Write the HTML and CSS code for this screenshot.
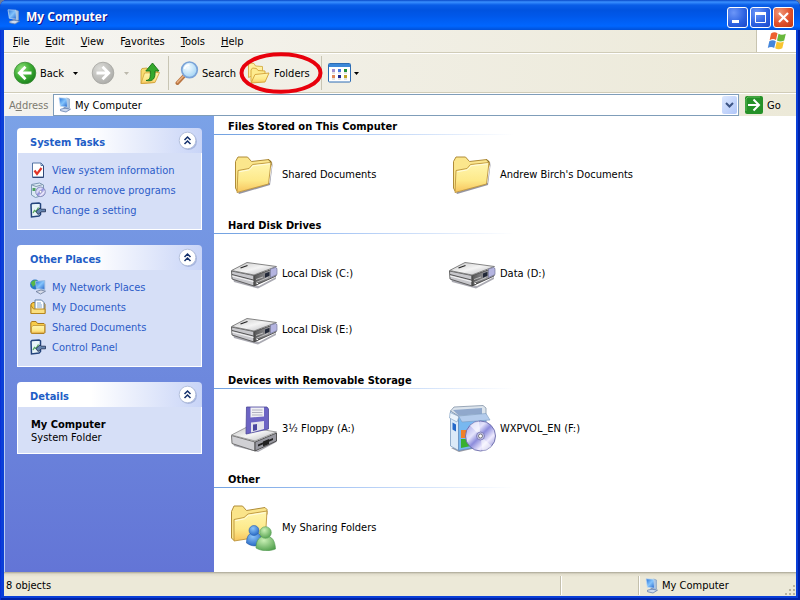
FILE: index.html
```html
<!DOCTYPE html>
<html lang="en">
<head>
<meta charset="utf-8">
<title>My Computer</title>
<link rel="stylesheet" href="styles.css">
</head>
<body>
<svg class="sprite" aria-hidden="true">
  <defs>
    <linearGradient id="g-folder" x1="0" y1="0" x2="0" y2="1"><stop offset="0" stop-color="#fff6b0"/><stop offset=".6" stop-color="#fde98a"/><stop offset="1" stop-color="#f7c45c"/></linearGradient>
    <linearGradient id="g-screen" x1="0" y1="0" x2="1" y2="1"><stop offset="0" stop-color="#2470d8"/><stop offset=".5" stop-color="#84c4fc"/><stop offset="1" stop-color="#2060c8"/></linearGradient>
    <radialGradient id="g-green" cx=".35" cy=".3" r=".8"><stop offset="0" stop-color="#8fe07a"/><stop offset=".5" stop-color="#3fae35"/><stop offset="1" stop-color="#157a18"/></radialGradient>
    <radialGradient id="g-grey" cx=".35" cy=".3" r=".8"><stop offset="0" stop-color="#dcdcd8"/><stop offset="1" stop-color="#a9a9a6"/></radialGradient>
    <linearGradient id="g-top" x1="0" y1="0" x2="1" y2="1"><stop offset="0" stop-color="#c4c4c4"/><stop offset=".5" stop-color="#f4f4f4"/><stop offset="1" stop-color="#b4b4b8"/></linearGradient>
    <linearGradient id="g-front" x1="0" y1="0" x2="1" y2="0"><stop offset="0" stop-color="#555"/><stop offset="1" stop-color="#b8b8be"/></linearGradient>
    <linearGradient id="g-disc" x1="0" y1="0" x2="1" y2="1"><stop offset="0" stop-color="#9a9ae4"/><stop offset=".35" stop-color="#e4e4fc"/><stop offset=".5" stop-color="#8c8cdc"/><stop offset=".7" stop-color="#f0ecff"/><stop offset="1" stop-color="#7878c8"/></linearGradient>
    <radialGradient id="g-lens" cx=".4" cy=".35" r=".7"><stop offset="0" stop-color="#f4fcff"/><stop offset="1" stop-color="#9fd2f4"/></radialGradient>
    <radialGradient id="g-blueman" cx=".4" cy=".3" r=".8"><stop offset="0" stop-color="#8cc4f8"/><stop offset="1" stop-color="#1c60c0"/></radialGradient>
    <radialGradient id="g-greenman" cx=".4" cy=".3" r=".8"><stop offset="0" stop-color="#c8f0b4"/><stop offset="1" stop-color="#4c9c48"/></radialGradient>
  </defs>
  <symbol id="i-computer" viewBox="0 0 16 16">
    <path d="M9.500 1l3 1V11l-2.500 1z" fill="#a8c0dc" stroke="#7c98bc" stroke-width=".6"/>
    <path d="M2 .8L9.800 1.200 10.500 10.200 3.300 9.300z" fill="url(#g-screen)" stroke="#c4dcf4" stroke-width=".7"/>
    <path d="M6.500 10l3 .3.500 2-3-.2z" fill="#8498b8"/>
    <path d="M3.500 12.200l4.500-1 5.500 1-4.500 2.800-5.500-1.300z" fill="#ccdaf0" stroke="#6480b0" stroke-width=".8"/>
  </symbol>
  <symbol id="i-back" viewBox="0 0 24 24">
    <circle cx="12" cy="12" r="10.800" fill="url(#g-green)" stroke="#3a8a34" stroke-width=".8"/>
    <path d="M12.500 5.800L6.300 12l6.200 6.200M7 12h11.500" fill="none" stroke="#fff" stroke-width="2.800"/>
  </symbol>
  <symbol id="i-forward" viewBox="0 0 24 24">
    <circle cx="12" cy="12" r="10.800" fill="url(#g-grey)" stroke="#a4a4a0" stroke-width=".8"/>
    <path d="M11.500 5.800l6.200 6.200-6.200 6.200M17 12H5.500" fill="none" stroke="#fff" stroke-width="2.800"/>
  </symbol>
  <symbol id="i-up" viewBox="0 0 24 24">
    <path d="M3 9.500l1-2 5-.5 1.500 1.500 9 .5v3L16 21.500 3 22.500z" fill="#f8dc70" stroke="#c89c30" stroke-width=".8"/>
    <path d="M6.500 12l15-.5-4.500 10L3 22.500z" fill="url(#g-folder)" stroke="#d0a038" stroke-width=".8"/>
    <path d="M8 19.500c4.500-.5 4.500-4 4.300-9.500H7.800L14.500 2l6.500 8h-4c.5 7-1.500 11-9 9.500z" fill="#35a82c" stroke="#177018" stroke-width=".9"/>
  </symbol>
  <symbol id="i-search" viewBox="0 0 24 24">
    <path d="M9.500 14.500l-7 7.500" stroke="#b87440" stroke-width="4" stroke-linecap="round"/>
    <path d="M9 14.500l-6.500 6.800" stroke="#e8b080" stroke-width="1.600" stroke-linecap="round"/>
    <circle cx="14.500" cy="8.800" r="7.800" fill="url(#g-lens)" stroke="#7ba4d8" stroke-width="1.700"/>
    <path d="M9.500 8c.6-2.600 2.600-4 5-3.800" fill="none" stroke="#fff" stroke-width="1.600"/>
  </symbol>
  <symbol id="i-folders" viewBox="0 0 24 24">
    <path d="M1.500 16.500V4l1.200-2L7 2.500 8.500 5l7 .5v4.500z" fill="#fff0a0" stroke="#d8b450"/>
    <path d="M4 20.500V9L5.500 7l4 .5L11 9.500l7 .5v5z" fill="#fdeb8e" stroke="#d8ac40"/>
    <path d="M8 13.500l14-1.500-4 9L4 22z" fill="url(#g-folder)" stroke="#d8a840"/>
  </symbol>
  <symbol id="i-views" viewBox="0 0 24 20">
    <rect x=".5" y=".5" width="22" height="18.500" rx="1" fill="#fff" stroke="#2c6cb4"/>
    <rect x="1" y="1" width="21" height="3" fill="#3c88d8"/>
    <path d="M4 6h3v3H4z" fill="#a090d0"/><path d="M10 6h3v3h-3z" fill="#4878e0"/><path d="M16 6h3v3h-3z" fill="#20903c"/>
    <path d="M4 12h3v3H4z" fill="#e08858"/><path d="M10 12h3v3h-3z" fill="#202c90"/><path d="M16 12h3v3h-3z" fill="#c0a428"/>
    <path d="M4 10h3M10 10h3M16 10h3M4 16h3M10 16h3M16 16h3" stroke="#bbb" stroke-width=".8"/>
  </symbol>
  <symbol id="i-flag" viewBox="0 0 20 20">
    <path d="M4 2.500C6.500.8 8.500 1 10.500 2.300L9 9C7 7.800 5 7.800 2.600 9.200z" fill="#ee6030"/>
    <path d="M11.500 2.800c2 1.200 4.500 1.400 7.300 0L17.200 9.500c-2.700 1.300-5 1.200-7.200 0z" fill="#68b83c"/>
    <path d="M2.300 10.200c2.200-1.300 4.400-1.300 6.500 0L7.200 17C5.200 15.600 3 15.600.8 17z" fill="#4486dc"/>
    <path d="M9.800 10.600c2.200 1.200 4.500 1.200 7.100 0l-1.600 6.700c-2.500 1.300-5 1.300-7.100 0z" fill="#f8c430"/>
  </symbol>
  <symbol id="i-folder" viewBox="0 0 48 48">
    <path d="M8 42.500l31.500-9.500L42.500 12v3L40 35 9 44z" fill="#5c5c70" opacity=".65"/>
    <path d="M5.500 38V11.500l2.500-4.500h9.500l4 4.500L39 9.500l2 2v5L7 41z" fill="#fbe68c" stroke="#b08c38"/>
    <path d="M38.500 10l2.500 2v3" fill="none" stroke="#7c6420"/>
    <path d="M8 20.500l11-2 3.500-4 18.500-2-2.500 21.500L7 42.500z" fill="url(#g-folder)" stroke="#bc943c" stroke-width=".9"/>
    <path d="M9.200 21.800L19.500 19.800l3.500-4 16.800-2" fill="none" stroke="#fffce0"/>
  </symbol>
  <symbol id="i-disk" viewBox="0 0 48 48">
    <path d="M3 30l26 7 17-9v2L28 39.500 4 33z" fill="#556" opacity=".5"/>
    <path d="M1.500 22L24 26.500v10.500L2 30z" fill="#c8c8cc" stroke="#555" stroke-width=".9"/>
    <path d="M24 26.500l22-7.500v8L24 37z" fill="url(#g-front)" stroke="#444" stroke-width=".9"/>
    <path d="M1.500 21.500L17 13.500 46.500 17.500 24 26z" fill="url(#g-top)" stroke="#777" stroke-width=".9"/>
    <path d="M40.500 20l5-1.500q1.500 0 1.500 2v5l-6.500 3z" fill="#b4b4e0" stroke="#777a9c" stroke-width=".7"/>
    <path d="M2 25.500l21.500 5.500" stroke="#555"/><path d="M2 27l21.500 5.500" stroke="#fff" stroke-width=".8"/>
    <path d="M35 24.500l4.500-1.700v4L35 28.700z" fill="#222838"/><path d="M26 30.500l7-2.500M26 33.500l12-5" stroke="#ddd" stroke-width=".7"/>
    <path d="M10.500 19l7-2.500" stroke="#222" stroke-width="1.200"/><path d="M26.500 34.500h1.500" stroke="#fff"/>
  </symbol>
  <symbol id="i-floppy" viewBox="0 0 48 48">
    <path d="M3 39l25 7.500L46.500 36v2L28 48 4 42z" fill="#556" opacity=".5"/>
    <path d="M1.500 31.500L25 38v9L2 39.500z" fill="#d0d0d4" stroke="#666" stroke-width=".9"/>
    <path d="M25 38l21.500-9v8L25 47z" fill="#9898a0" stroke="#444" stroke-width=".9"/>
    <path d="M1.500 31L17 23l29.500 5L25 37z" fill="url(#g-top)" stroke="#888" stroke-width=".8"/>
    <path d="M28 40.500l15-6.500v2L28 42.500zM33 37.500l6-2.500v5l-6 2.500z" fill="#222"/>
    <path d="M16.500 3h20.500l1.500 2v20L16 30z" fill="#6c64c4" stroke="#4c4898" stroke-width=".8"/>
    <path d="M20.500 3.500h13.500v9l-13.500 1z" fill="#f0f0f4"/>
    <path d="M22 6h10.500M22 8.500h10.500M22 11h10.500" stroke="#aab" stroke-width=".9"/>
    <path d="M21 18.500l13-1.500v8l-13 3.500z" fill="#e4e4ec"/><path d="M23 20.500l4-.5v6l-4 1z" fill="#4c48a0"/>
  </symbol>
  <symbol id="i-install" viewBox="0 0 48 48">
    <path d="M3 44l8 4 26-6-3-3z" fill="#556" opacity=".6"/>
    <path d="M2.500 7l8 5V46.500l-8-4.500z" fill="#dceaf8" stroke="#7c9cc0" stroke-width=".8"/>
    <path d="M10.500 12H38v29.500L10.500 46.500z" fill="#78b8f0" stroke="#6890c0" stroke-width=".8"/>
    <path d="M2.500 7L6 3 35 1.500 38 4v8H10.500z" fill="#dce4ec" stroke="#8494a8" stroke-width=".8"/>
    <path d="M5 6l5.500 5.500L34 10V4z" fill="#90a8cc"/>
    <path d="M2 8.500l9 4L9 18 1.500 14z" fill="#ecf4fc" stroke="#7c9cc0" stroke-width=".6"/>
    <path d="M10.500 12L38 9.500l4 6.500L14 18z" fill="#b4ccec" stroke="#7c9cc0" stroke-width=".6"/>
    <path d="M4.500 18.500l3.500 2v7l-3.500-2z" fill="#2468c8"/>
    <path d="M13 26h8v8h-8z" fill="#f08028"/><path d="M13 35h10v7l-10 2z" fill="#38b030"/>
    <circle cx="32.500" cy="32" r="15" fill="url(#g-disc)" stroke="#6868a8" stroke-width=".9"/>
    <path d="M32.500 32L22 21.500a15 15 0 0 1 9-4.300z" fill="#fff" opacity=".6"/>
    <path d="M32.500 32l11 10a15 15 0 0 1-9 4.800z" fill="#fff" opacity=".55"/>
    <circle cx="32.500" cy="32" r="4" fill="#c0c0e8" stroke="#7474b0" stroke-width=".8"/><circle cx="32.500" cy="32" r="2" fill="#fff" stroke="#555" stroke-width=".7"/>
  </symbol>
  <symbol id="i-sharing" viewBox="0 0 48 48">
    <path d="M1.500 35V8.500L4 3h8.500l4 4.500L35 4.500l2 2v5L4 37.500z" fill="#fae48a" stroke="#b08c38"/>
    <path d="M4 16.500l10-2 4-3.500 19-3-1.500 25L4 38z" fill="url(#g-folder)" stroke="#bc943c" stroke-width=".9"/>
    <path d="M5.200 17.700l9.300-1.900 4-3.500 17-2.600" fill="none" stroke="#fffce0"/>
    <path d="M16.500 40c0-7 3-10.500 8-10.500 5.500 0 7.500 4 7.500 11-5 3.500-10.500 3-15.500-.5z" fill="url(#g-blueman)" stroke="#2058a8" stroke-width=".6"/>
    <circle cx="24" cy="27.500" r="5" fill="url(#g-blueman)" stroke="#2860b0" stroke-width=".6"/>
    <path d="M26 45c0-8 3.500-12 9.500-12 6.500 0 9.500 4.500 10 13-6.500 2.500-13.500 2.500-19.500-1z" fill="url(#g-greenman)" stroke="#509850" stroke-width=".6"/>
    <circle cx="35.500" cy="29.500" r="5.800" fill="url(#g-greenman)" stroke="#58a058" stroke-width=".6"/>
  </symbol>
  <symbol id="i-info" viewBox="0 0 16 16">
    <path d="M2.500 1h8.500l2.500 2.500V15h-11z" fill="#fff" stroke="#5474a4"/><path d="M11 1v2.500h2.500" fill="none" stroke="#5474a4"/>
    <path d="M13.500 4v11.500h-11" fill="none" stroke="#304878"/>
    <path d="M4.500 8.500l2.500 3.500L11.500 6" fill="none" stroke="#e03428" stroke-width="2.200"/>
  </symbol>
  <symbol id="i-programs" viewBox="0 0 16 16">
    <path d="M1.500 2.500l8-1.500 4 2v10l-8 2.500-4-2.500z" fill="#dceaf4" stroke="#7c98b4"/>
    <path d="M2 3l4 1.500 7-2" fill="none" stroke="#8498b0"/><path d="M2.500 6h3v3h-3z" fill="#50a060"/>
    <circle cx="10.500" cy="9.800" r="4.800" fill="url(#g-disc)" stroke="#7880b0" stroke-width=".8"/><circle cx="10.500" cy="9.800" r="1.300" fill="#fff" stroke="#779" stroke-width=".5"/>
  </symbol>
  <symbol id="i-control" viewBox="0 0 16 16">
    <path d="M1 2.500L2 1.500 9 1l1.500 1v10.500L9 14l-7.500 1z" fill="#e8f4f8" stroke="#24447c" stroke-width="1.500"/>
    <path d="M3 11l1.500-2.500L6 9.500l2.500-4" stroke="#58a860" fill="none" stroke-width="1.300"/>
    <path d="M6 9.500l4-3.500 1.500 1.200h4v2.600h-4L8 12.500z" fill="#6484b0" stroke="#1c2c50" stroke-width=".8"/>
  </symbol>
  <symbol id="i-network" viewBox="0 0 16 16">
    <circle cx="5" cy="5.500" r="4.900" fill="#2878c8"/><path d="M.8 4c2-3 4-2.500 5.500-3L6 5 3 8z" fill="#58b848"/>
    <path d="M5.500 2.500L14.800 1.500v9L6.500 9.500z" fill="url(#g-screen)" stroke="#9cbce0" stroke-width=".9"/>
    <path d="M6 12.500l5-1.500 4.500 1.200-5 2.800z" fill="#d8dce8" stroke="#687898" stroke-width=".8"/>
  </symbol>
  <symbol id="i-documents" viewBox="0 0 16 16">
    <path d="M1 14.500V5l2-1.500h10.500l1.500 2v9z" fill="#f8c840" stroke="#a87818"/>
    <path d="M5 1h6.500L14 3.500V11H5z" fill="#fff" stroke="#6080a8"/><path d="M7 4h4M7 6h5M7 8h5" stroke="#84a8d0"/>
    <path d="M1 14.500V6.500L3.500 10H15v4.500z" fill="#fbe080" stroke="#b88820"/>
  </symbol>
  <symbol id="i-small-folder" viewBox="0 0 16 16">
    <path d="M.8 13.500V3.500L2 2.500h4l1.500 2H14l1 1v8l-1 1H2z" fill="#f8cc48" stroke="#a87820"/>
    <path d="M1.500 14.200V8l1.500-1.500h11.500V14z" fill="url(#g-folder)" stroke="#b88828" stroke-width=".7"/>
  </symbol>
  <symbol id="i-go" viewBox="0 0 18 18">
    <rect width="18" height="18" rx="2" fill="#259128"/><path d="M1 15V3l2-2h12" fill="none" stroke="#78c870" opacity=".7"/>
    <path d="M8.500 3.500L14 9l-5.500 5.500M3 9h10.500" fill="none" stroke="#fff" stroke-width="2"/>
  </symbol>
  <symbol id="i-caret" viewBox="0 0 5 3"><path d="M0 0h5L2.500 3z" fill="currentColor"/></symbol>
  <symbol id="i-collapse" viewBox="0 0 20 20">
    <circle cx="10.500" cy="10.500" r="8.500" fill="#6c80b8" opacity=".4"/><circle cx="9.500" cy="9.500" r="8.300" fill="#fff" stroke="#b4c0dc"/>
    <path d="M6.500 9l3-3 3 3M6.500 13l3-3 3 3" fill="none" stroke="#14306c" stroke-width="1.500"/>
  </symbol>
</svg>
<div class="window">
  <header class="titlebar">
    <svg class="icon16"><use href="#i-computer"/></svg>
    <h1>My Computer</h1>
    <button class="caption" aria-label="Minimize"><svg viewBox="0 0 19 19"><path d="M4 12h7v3H4z" fill="#fff"/></svg></button>
    <button class="caption" aria-label="Maximize"><svg viewBox="0 0 19 19"><path d="M4.500 5v9.500h10V5" fill="none" stroke="#fff"/><path d="M4 4h11v3H4z" fill="#fff"/></svg></button>
    <button class="caption close" aria-label="Close"><svg viewBox="0 0 19 19"><path d="M5 5l9 9M14 5l-9 9" stroke="#fff" stroke-width="2.200"/></svg></button>
  </header>
  <nav class="menubar">
    <button><u>F</u>ile</button>
    <button><u>E</u>dit</button>
    <button><u>V</u>iew</button>
    <button>F<u>a</u>vorites</button>
    <button><u>T</u>ools</button>
    <button><u>H</u>elp</button>
    <span class="throbber"><svg><use href="#i-flag"/></svg></span>
  </nav>
  <div class="toolbar">
    <button class="tool back"><svg class="icon24"><use href="#i-back"/></svg>Back<svg class="caret"><use href="#i-caret"/></svg></button>
    <button class="tool forward" aria-label="Forward" disabled><svg class="icon24"><use href="#i-forward"/></svg><svg class="caret"><use href="#i-caret"/></svg></button>
    <button class="tool" aria-label="Up"><svg class="icon24"><use href="#i-up"/></svg></button>
    <span class="divider"></span>
    <button class="tool"><svg class="icon24"><use href="#i-search"/></svg>Search</button>
    <button class="tool folders"><svg class="icon24"><use href="#i-folders"/></svg>Folders<svg class="ring" viewBox="0 0 84 42"><ellipse cx="42" cy="21" rx="39.500" ry="18.800" fill="none" stroke="#e8000c" stroke-width="4"/></svg></button>
    <span class="divider"></span>
    <button class="tool views" aria-label="Views"><svg class="view-icon"><use href="#i-views"/></svg><svg class="caret"><use href="#i-caret"/></svg></button>
  </div>
  <form class="addressbar">
    <label for="address">A<u>d</u>dress</label>
    <div class="combo">
      <svg class="icon16 combo-icon"><use href="#i-computer"/></svg>
      <select id="address"><option>My Computer</option></select>
      <span class="combo-arrow"><svg viewBox="0 0 9 6"><path d="M1 1l3.500 3.500L8 1" fill="none" stroke="#3c5484" stroke-width="2"/></svg></span>
    </div>
    <button class="go" type="button"><svg><use href="#i-go"/></svg>Go</button>
  </form>
  <main class="body">
    <aside class="sidebar">
      <section class="panel">
        <header><h2>System Tasks</h2><button aria-label="Collapse System Tasks"><svg><use href="#i-collapse"/></svg></button></header>
        <ul>
          <li><a href="#"><svg class="icon16"><use href="#i-info"/></svg>View system information</a></li>
          <li><a href="#"><svg class="icon16"><use href="#i-programs"/></svg>Add or remove programs</a></li>
          <li><a href="#"><svg class="icon16"><use href="#i-control"/></svg>Change a setting</a></li>
        </ul>
      </section>
      <section class="panel">
        <header><h2>Other Places</h2><button aria-label="Collapse Other Places"><svg><use href="#i-collapse"/></svg></button></header>
        <ul>
          <li><a href="#"><svg class="icon16"><use href="#i-network"/></svg>My Network Places</a></li>
          <li><a href="#"><svg class="icon16"><use href="#i-documents"/></svg>My Documents</a></li>
          <li><a href="#"><svg class="icon16"><use href="#i-small-folder"/></svg>Shared Documents</a></li>
          <li><a href="#"><svg class="icon16"><use href="#i-control"/></svg>Control Panel</a></li>
        </ul>
      </section>
      <section class="panel">
        <header><h2>Details</h2><button aria-label="Collapse Details"><svg><use href="#i-collapse"/></svg></button></header>
        <div class="details"><strong>My Computer</strong><p>System Folder</p></div>
      </section>
    </aside>
    <div class="files">
      <section class="group">
        <h2>Files Stored on This Computer</h2>
        <div class="items">
          <a class="item" href="#"><svg><use href="#i-folder"/></svg>Shared Documents</a>
          <a class="item" href="#"><svg><use href="#i-folder"/></svg>Andrew Birch's Documents</a>
        </div>
      </section>
      <section class="group">
        <h2>Hard Disk Drives</h2>
        <div class="items">
          <a class="item" href="#"><svg><use href="#i-disk"/></svg>Local Disk (C:)</a>
          <a class="item" href="#"><svg><use href="#i-disk"/></svg>Data (D:)</a>
          <a class="item" href="#"><svg><use href="#i-disk"/></svg>Local Disk (E:)</a>
        </div>
      </section>
      <section class="group">
        <h2>Devices with Removable Storage</h2>
        <div class="items">
          <a class="item" href="#"><svg><use href="#i-floppy"/></svg>3½ Floppy (A:)</a>
          <a class="item" href="#"><svg><use href="#i-install"/></svg>WXPVOL_EN (F:)</a>
        </div>
      </section>
      <section class="group">
        <h2>Other</h2>
        <div class="items">
          <a class="item" href="#"><svg><use href="#i-sharing"/></svg>My Sharing Folders</a>
        </div>
      </section>
    </div>
  </main>
  <footer class="statusbar">
    <span class="count">8 objects</span>
    <span class="cell"></span>
    <span class="cell place"><svg class="icon16"><use href="#i-computer"/></svg>My Computer</span>
    <svg class="grip" viewBox="0 0 12 12"><path d="M9 1h2v2H9zM5 5h2v2H5zM9 5h2v2H9zM1 9h2v2H1zM5 9h2v2H5zM9 9h2v2H9z" fill="#b8b4a0"/></svg>
  </footer>
</div>
</body>
</html>
```
FILE: styles.css
```css
* { box-sizing: border-box; }
body {
  margin: 0;
  background: #6c7c98;
  font: 11px/13px Tahoma, "DejaVu Sans Condensed", "Noto Sans", sans-serif;
  color: #000;
}
h1, h2, p, ul { margin: 0; padding: 0; }
ul { list-style: none; }
svg { display: block; flex: none; }
a { color: inherit; text-decoration: none; }
button, select { font: inherit; color: inherit; border: 0; margin: 0; padding: 0; background: none; }
.sprite { position: absolute; width: 0; height: 0; }
.icon16 { width: 16px; height: 16px; }
.icon24 { width: 24px; height: 24px; }

.window {
  display: flex;
  flex-direction: column;
  min-height: 100vh;
  padding: 0 4px 4px;
  background: #0a3fd8;
  border-radius: 7px 7px 0 0;
  box-shadow: inset 1px 0 #0831d9, inset -2px -2px #0022a8;
}
.titlebar {
  display: flex;
  align-items: center;
  gap: 2px;
  height: 30px;
  margin: 0 -4px;
  padding: 4px 6px 0;
  border-radius: 7px 7px 0 0;
  background: linear-gradient(#0848c8 0, #3a90ff 2px, #0a5ee8 5px, #0053e0 10px, #0058ea 16px, #0066ff 26px, #0050d8 30px);
}
.titlebar h1 {
  flex: 1;
  padding-left: 2px;
  font: bold 12px/16px "Trebuchet MS", "Open Sans", sans-serif;
  color: #fff;
  text-shadow: 1px 1px #0f1089;
}
.caption {
  width: 21px;
  height: 21px;
  border: 1px solid #fff;
  border-radius: 3px;
  background: radial-gradient(circle at 30% 25%, #6c96f8, #2a60e0 60%, #1c48c8);
}
.caption svg { width: 19px; height: 19px; }
.close { background: radial-gradient(circle at 30% 25%, #f09878, #e0502c 55%, #c03810); }

.menubar {
  display: flex;
  align-items: center;
  gap: 16px;
  height: 23px;
  padding-left: 9px;
  background: linear-gradient(90deg, #f6f5f2, #ece9d8);
  border-bottom: 1px solid #d0ccb8;
}
.throbber {
  display: grid;
  place-items: center;
  width: 40px;
  height: 22px;
  margin-left: auto;
  background: #fff;
  border-left: 1px solid #c8c4b0;
}
.throbber svg { width: 20px; height: 20px; }

.toolbar {
  display: flex;
  align-items: center;
  height: 40px;
  padding-left: 9px;
  background: linear-gradient(90deg, #f4f3ee, #ece9d8);
  border-bottom: 1px solid #d0ccb8;
  border-top: 1px solid #fff;
}
.tool { position: relative; display: flex; align-items: center; gap: 3px; }
.tool .caret { width: 5px; height: 3px; }
.back .caret { margin-left: 6px; }
.back { margin-right: 13px; }
.forward { gap: 9px; color: #bcb9ac; margin-right: 9px; }
.divider { width: 1px; height: 34px; margin: 0 6px; background: #c8c5b4; }
.folders { margin-left: 11px; margin-right: 5px; }
.views { gap: 2px; }
.view-icon { width: 24px; height: 20px; }
.ring { position: absolute; left: -8px; top: -9px; width: 84px; height: 42px; pointer-events: none; }

.addressbar {
  display: flex;
  align-items: center;
  height: 23px;
  padding-left: 5px;
  background: linear-gradient(90deg, #f4f3ee, #ece9d8);
  border-top: 1px solid #fff;
}
.addressbar label { width: 44px; color: #7c7a70; }
.combo {
  position: relative;
  flex: 1;
  height: 22px;
  background: #fff;
  border: 1px solid #7f9db9;
}
.combo select { width: 100%; height: 20px; padding-left: 21px; appearance: none; outline: 0; }
.combo-icon { position: absolute; left: 3px; top: 2px; }
.combo-arrow {
  position: absolute;
  right: 1px;
  top: 1px;
  display: grid;
  place-items: center;
  width: 15px;
  height: 18px;
  border-radius: 2px;
  background: linear-gradient(135deg, #dce8ff, #b0c6f8);
  pointer-events: none;
}
.combo-arrow svg { width: 9px; height: 6px; }
.go { display: flex; align-items: center; gap: 4px; width: 57px; padding-left: 6px; }
.go svg { width: 18px; height: 18px; }

.body {
  flex: 1;
  display: grid;
  grid-template-columns: 210px 1fr;
  background: #fff;
}
.sidebar {
  display: flex;
  flex-direction: column;
  gap: 15px;
  padding: 12px;
  background: linear-gradient(#7ba2e7, #6375d6);
  border-left: 1px solid #b8ccf4;
}
.panel header {
  display: flex;
  align-items: center;
  justify-content: space-between;
  height: 25px;
  padding: 0 4px 0 13px;
  border-radius: 4px 4px 0 0;
  background: linear-gradient(90deg, #fff 40%, #c8d4f7);
}
.panel h2 { font-size: 11px; line-height: 13px; padding-top: 3px; color: #215dc6; }
.panel header svg { width: 20px; height: 20px; }
.panel ul, .details { background: #d6dff7; border: 1px solid #fff; border-top: 0; }
.panel ul { padding: 7px 12px 9px; color: #2c5cc8; }
.panel li a { display: flex; align-items: center; gap: 6px; height: 20px; }
.details { padding: 11px 13px 9px; }
.details strong { display: block; }

.group h2 {
  height: 19px;
  padding: 4px 14px 0;
  font-size: 11px;
  line-height: 13px;
  background: linear-gradient(90deg, #70a0e0, #a4c4f4 120px, #fff 300px) bottom / 100% 1px no-repeat;
}
.items {
  display: grid;
  grid-template-columns: repeat(auto-fill, 218px);
  grid-auto-rows: 56px;
  max-width: 500px;
  padding: 11px 0 13px 16px;
}
.item { display: flex; align-items: center; gap: 4px; }
.item svg { width: 48px; height: 48px; }

.statusbar {
  position: relative;
  display: flex;
  align-items: center;
  height: 24px;
  padding-top: 3px;
  background: linear-gradient(#a8a594, #e0dccb 2px, #ece9d8 5px);
}
.count { flex: 1; padding-left: 2px; }
.cell {
  display: flex;
  align-items: center;
  gap: 2px;
  width: 78px;
  height: 19px;
  border-left: 1px solid #c4c0ac;
  box-shadow: inset 1px 0 #fff;
}
.place { width: 158px; padding-left: 5px; }
.grip { position: absolute; right: 0; bottom: 0; width: 12px; height: 12px; }
```
